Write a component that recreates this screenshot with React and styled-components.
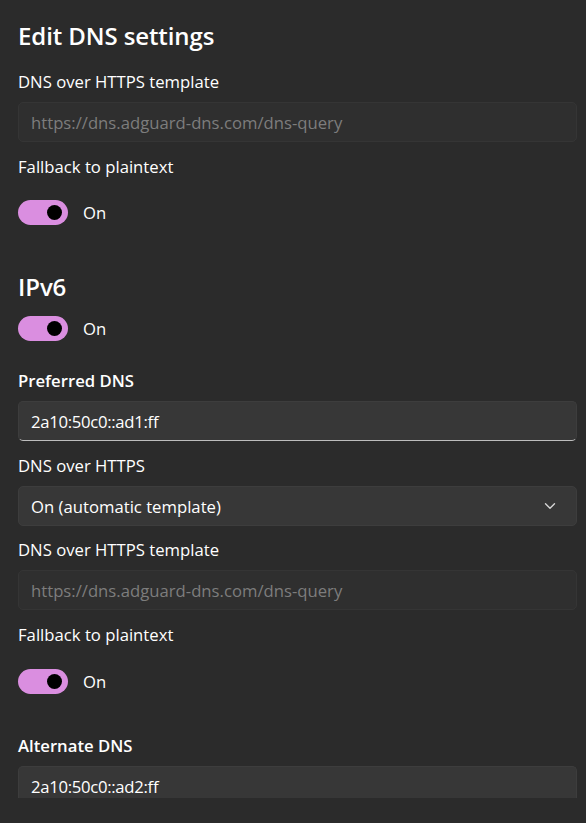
import styled, { createGlobalStyle } from "styled-components";

const GlobalStyle = createGlobalStyle`
  html, body {
    margin: 0;
    padding: 0;
    background: #2b2b2b;
  }
  * {
    box-sizing: border-box;
  }
`;

const Scroller = styled.div`
  height: 798px;
  overflow: hidden;
  padding: 20px 9px 0 18px;
  font-family: "Open Sans", "Noto Sans", sans-serif;
  color: #ffffff;
`;

const Heading = styled.h1`
  margin: ${(p) => p.$top || 0}px 0 0;
  font-size: 24px;
  line-height: 32px;
  font-weight: 600;
  letter-spacing: -0.1px;
`;

const Label = styled.div`
  margin-top: ${(p) => p.$top || 13}px;
  font-size: 16.7px;
  line-height: 24px;
  font-weight: ${(p) => (p.$bold ? 600 : 400)};
`;

const Field = styled.div`
  margin-top: 8px;
  height: 40px;
  display: flex;
  align-items: center;
  padding: 0 12px;
  border-radius: 5px;
  font-size: 16.7px;
  letter-spacing: ${(p) => (p.$disabled ? 0 : -0.3)}px;
  background: ${(p) => (p.$disabled ? "#2f2f2f" : "#373737")};
  border: 1px solid ${(p) => (p.$disabled ? "#353535" : "#3d3d3d")};
  border-bottom-color: ${(p) => (p.$disabled ? "#353535" : "#bdbdbd")};
  color: ${(p) => (p.$disabled ? "#7d7d7d" : "#ffffff")};
`;

const Select = styled(Field)`
  justify-content: space-between;
  letter-spacing: 0;
  border-bottom-color: #3d3d3d;
  padding-right: 20px;
`;

const ToggleRow = styled.div`
  margin-top: ${(p) => p.$top || 21}px;
  display: flex;
  align-items: center;
  gap: 15px;
  font-size: 16.7px;
  height: 25px;
`;

const Track = styled.div`
  width: 50px;
  height: 25px;
  border-radius: 13px;
  background: #da8ee0;
  display: flex;
  align-items: center;
  justify-content: flex-end;
  padding-right: 6px;
`;

const Knob = styled.div`
  width: 15px;
  height: 15px;
  border-radius: 50%;
  background: #000000;
`;

function Toggle({ top }) {
  return (
    <ToggleRow $top={top}>
      <Track>
        <Knob />
      </Track>
      <span>On</span>
    </ToggleRow>
  );
}

function Chevron() {
  return (
    <svg width="12" height="8" viewBox="0 0 12 8" fill="none">
      <path d="M1.5 1.8 L6 6.2 L10.5 1.8" stroke="#d6d6d6" strokeWidth="1.4" strokeLinecap="round" strokeLinejoin="round" />
    </svg>
  );
}

export default function App() {
  return (
    <>
      <GlobalStyle />
      <Scroller>
        <Heading>Edit DNS settings</Heading>
        <Label $top={18}>DNS over HTTPS template</Label>
        <Field $disabled>https://dns.adguard-dns.com/dns-query</Field>
        <Label>Fallback to plaintext</Label>
        <Toggle />

        <Heading $top={46}>IPv6</Heading>
        <Toggle top={13} />
        <Label $top={28} $bold>Preferred DNS</Label>
        <Field>2a10:50c0::ad1:ff</Field>
        <Label>DNS over HTTPS</Label>
        <Select>
          <span>On (automatic template)</span>
          <Chevron />
        </Select>
        <Label $top={12}>DNS over HTTPS template</Label>
        <Field $disabled>https://dns.adguard-dns.com/dns-query</Field>
        <Label>Fallback to plaintext</Label>
        <Toggle top={22} />
        <Label $top={40} $bold>Alternate DNS</Label>
        <Field>2a10:50c0::ad2:ff</Field>
      </Scroller>
    </>
  );
}
